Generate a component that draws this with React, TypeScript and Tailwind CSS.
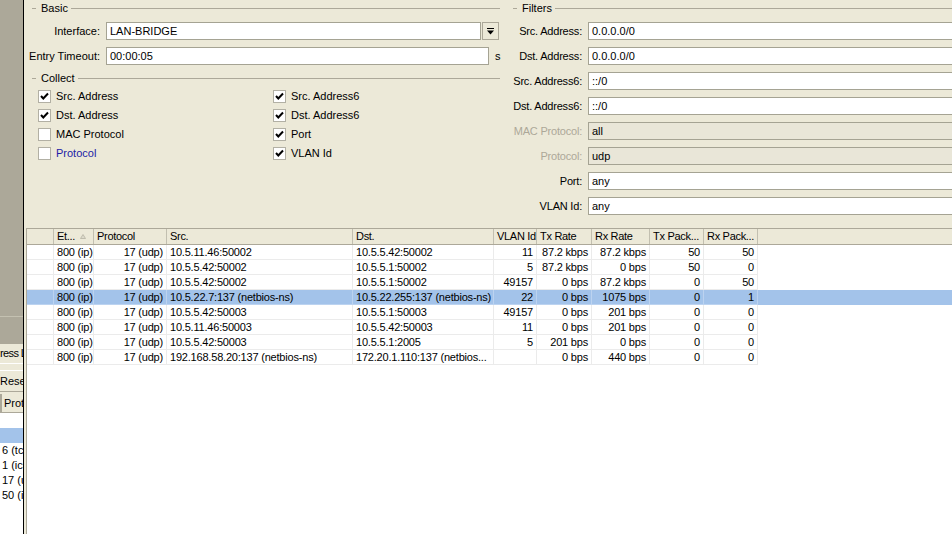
import React from "react";

const FONT = "font-['Liberation_Sans',Arial,sans-serif]";

function GroupTitle({ title, last }: { title: string; last?: boolean }) {
  return (
    <div className={`ml-[8px] flex h-4 items-center ${last ? "" : "mr-[5px]"}`}>
      <div className="h-px w-[4px] bg-[#aca899]" />
      <span className="ml-[5px] mr-[3px] leading-none">{title}</span>
      <div className="h-px flex-1 bg-[#aca899]" />
    </div>
  );
}

function Field({ value, disabled, className = "" }: { value: string; disabled?: boolean; className?: string }) {
  return (
    <div
      className={`flex h-[18px] items-center whitespace-nowrap border border-[#a5a393] pl-[3px] leading-none ${
        disabled ? "bg-[#e9e6d8]" : "bg-white"
      } ${className}`}
    >
      {value}
    </div>
  );
}

function Check({ on, label, blue }: { on?: boolean; label: string; blue?: boolean }) {
  return (
    <div className="flex h-[19px] items-center gap-[5px]">
      <div className="flex h-[13px] w-[13px] items-center justify-center border border-[#b2b0a4] bg-white">
        {on && (
          <svg width="11" height="11" viewBox="0 0 11 11">
            <polyline points="2,5 4.3,7.5 9,2.5" fill="none" stroke="#000" strokeWidth="2" />
          </svg>
        )}
      </div>
      <span className={`leading-none ${blue ? "text-[#1c1ca6]" : ""}`}>{label}</span>
    </div>
  );
}

function SideStrip() {
  const rows = ["6 (tcp)", "1 (icmp)", "17 (udp)", "50 (ipsec-esp)"];
  return (
    <div className="flex w-[24px] shrink-0 flex-col overflow-hidden whitespace-nowrap border-r border-black bg-[#aca899]">
      <div className="h-[316px] shrink-0" />
      <div className="h-px shrink-0 bg-[#c4c1b1]" />
      <div className="h-[27px] shrink-0" />
      <div className="h-[19px] shrink-0 bg-[#ece9d8] leading-[19px] tracking-[-0.6px]">ress List</div>
      <div className="h-[7px] shrink-0 border-t border-white bg-[#ece9d8]" />
      <div className="h-[22px] shrink-0 border-b border-t border-b-[#aca899] border-t-white bg-[#ece9d8] leading-[20px]">
        Reset Counters
      </div>
      <div className="h-[2px] shrink-0 bg-[#ece9d8]" />
      <div className="ml-[1px] h-[19px] shrink-0 border-b border-l border-[#aca899] bg-[#ece9d8] pl-[2px] leading-[18px]">
        Protocol
      </div>
      <div className="flex flex-1 flex-col bg-white">
        <div className="h-[15px] shrink-0" />
        <div className="h-[15px] shrink-0 bg-[#a3c3ea]" />
        {rows.map((r) => (
          <div key={r} className="h-[15px] shrink-0 pl-[2px] leading-[15px]">
            {r}
          </div>
        ))}
      </div>
    </div>
  );
}

function LeftForm() {
  return (
    <div className="flex w-[481px] shrink-0 flex-col">
      <GroupTitle title="Basic" />
      <div className="mt-[6px] flex h-[18px] items-center">
        <span className="w-[76px] text-right">Interface:</span>
        <Field value="LAN-BRIDGE" className="ml-[6px] w-[375px]" />
        <div className="ml-[1px] flex h-[18px] w-[17px] items-center justify-center border border-[#aca899] bg-[#ece9d8]">
          <svg width="7" height="7" viewBox="0 0 7 7">
            <rect x="0" y="0" width="7" height="1" fill="#000" />
            <path d="M0 2.5h7L3.5 6.5z" fill="#000" />
          </svg>
        </div>
      </div>
      <div className="mt-[7px] flex h-[18px] items-center">
        <span className="w-[76px] whitespace-nowrap text-right">Entry Timeout:</span>
        <Field value="00:00:05" className="ml-[6px] w-[383px]" />
        <span className="ml-[6px]">s</span>
      </div>
      <div className="mt-[5px]">
        <GroupTitle title="Collect" />
      </div>
      <div className="mt-[1px] grid grid-cols-[235px_1fr] pl-[14px]">
        <div className="flex flex-col">
          <Check on label="Src. Address" />
          <Check on label="Dst. Address" />
          <Check label="MAC Protocol" />
          <Check label="Protocol" blue />
        </div>
        <div className="flex flex-col">
          <Check on label="Src. Address6" />
          <Check on label="Dst. Address6" />
          <Check on label="Port" />
          <Check on label="VLAN Id" />
        </div>
      </div>
    </div>
  );
}

function RightForm() {
  const filters: { label: string; value: string; disabled?: boolean }[] = [
    { label: "Src. Address:", value: "0.0.0.0/0" },
    { label: "Dst. Address:", value: "0.0.0.0/0" },
    { label: "Src. Address6:", value: "::/0" },
    { label: "Dst. Address6:", value: "::/0" },
    { label: "MAC Protocol:", value: "all", disabled: true },
    { label: "Protocol:", value: "udp", disabled: true },
    { label: "Port:", value: "any" },
    { label: "VLAN Id:", value: "any" },
  ];
  return (
    <div className="flex min-w-0 flex-1 flex-col overflow-hidden">
      <GroupTitle title="Filters" last />
      <div className="mt-[6px] flex flex-col gap-[7px]">
        {filters.map((f) => (
          <div key={f.label} className="flex h-[18px] items-center">
            <span
              className={`w-[77px] shrink-0 whitespace-nowrap text-right tracking-[-0.2px] ${
                f.disabled ? "text-[#aca899]" : ""
              }`}
            >
              {f.label}
            </span>
            <Field value={f.value} disabled={f.disabled} className="ml-[6px] flex-1 border-r-0" />
          </div>
        ))}
      </div>
    </div>
  );
}

type Col = { w: string; title: string; right?: boolean };

const COLS: Col[] = [
  { w: "w-[27px]", title: "" },
  { w: "w-[40px]", title: "Et..." },
  { w: "w-[73px]", title: "Protocol", right: true },
  { w: "w-[186px]", title: "Src." },
  { w: "w-[141px]", title: "Dst." },
  { w: "w-[43px]", title: "VLAN Id", right: true },
  { w: "w-[55px]", title: "Tx Rate", right: true },
  { w: "w-[58px]", title: "Rx Rate", right: true },
  { w: "w-[54px]", title: "Tx Pack...", right: true },
  { w: "w-[54px]", title: "Rx Pack...", right: true },
];

const ROWS: string[][] = [
  ["", "800 (ip)", "17 (udp)", "10.5.11.46:50002", "10.5.5.42:50002", "11", "87.2 kbps", "87.2 kbps", "50", "50"],
  ["", "800 (ip)", "17 (udp)", "10.5.5.42:50002", "10.5.5.1:50002", "5", "87.2 kbps", "0 bps", "50", "0"],
  ["", "800 (ip)", "17 (udp)", "10.5.5.42:50002", "10.5.5.1:50002", "49157", "0 bps", "87.2 kbps", "0", "50"],
  ["", "800 (ip)", "17 (udp)", "10.5.22.7:137 (netbios-ns)", "10.5.22.255:137 (netbios-ns)", "22", "0 bps", "1075 bps", "0", "1"],
  ["", "800 (ip)", "17 (udp)", "10.5.5.42:50003", "10.5.5.1:50003", "49157", "0 bps", "201 bps", "0", "0"],
  ["", "800 (ip)", "17 (udp)", "10.5.11.46:50003", "10.5.5.42:50003", "11", "0 bps", "201 bps", "0", "0"],
  ["", "800 (ip)", "17 (udp)", "10.5.5.42:50003", "10.5.5.1:2005", "5", "201 bps", "0 bps", "0", "0"],
  ["", "800 (ip)", "17 (udp)", "192.168.58.20:137 (netbios-ns)", "172.20.1.110:137 (netbios...", "", "0 bps", "440 bps", "0", "0"],
];

const SELECTED = 3;

function FlowTable() {
  return (
    <div className="ml-[2px] flex flex-1 flex-col overflow-hidden border-l border-t border-[#aca899]">
      <div className="flex h-[16px] shrink-0 border-b border-[#aca899] bg-[#ece9d8] tracking-[-0.3px]">
        {COLS.map((c, i) => (
          <div
            key={i}
            className={`${c.w} flex shrink-0 items-center overflow-hidden whitespace-nowrap border-r border-[#c2bfb0] pl-[3px] leading-none`}
          >
            <span>{c.title}</span>
            {i === 1 && (
              <svg className="ml-auto mr-[7px]" width="6" height="5" viewBox="0 0 6 5">
                <path d="M3 0.5L5.5 4.5H0.5z" fill="#dedbcc" stroke="#b5b2a3" strokeWidth="0.8" />
              </svg>
            )}
          </div>
        ))}
        <div className="flex-1" />
      </div>
      <div className="flex flex-1 flex-col bg-white tracking-[-0.2px]">
        {ROWS.map((r, ri) => {
          const sel = ri === SELECTED;
          return (
            <div key={ri} className={`flex h-[15px] shrink-0 ${sel ? "bg-[#a3c3ea]" : ""}`}>
              {COLS.map((c, ci) => (
                <div
                  key={ci}
                  className={`${c.w} shrink-0 overflow-hidden whitespace-nowrap border-b border-r px-[3px] leading-[14px] ${
                    sel ? "border-[#bcd3f0]" : "border-[#ebebeb]"
                  } ${c.right ? "text-right" : ""}`}
                >
                  {r[ci]}
                </div>
              ))}
              <div className="flex-1" />
            </div>
          );
        })}
      </div>
    </div>
  );
}

export default function App() {
  return (
    <div className={`flex h-[534px] w-[952px] overflow-hidden bg-[#ece9d8] text-[11px] text-black ${FONT}`}>
      <SideStrip />
      <div className="flex min-w-0 flex-1 flex-col">
        <div className="flex h-[228px] shrink-0">
          <LeftForm />
          <RightForm />
        </div>
        <FlowTable />
      </div>
    </div>
  );
}
